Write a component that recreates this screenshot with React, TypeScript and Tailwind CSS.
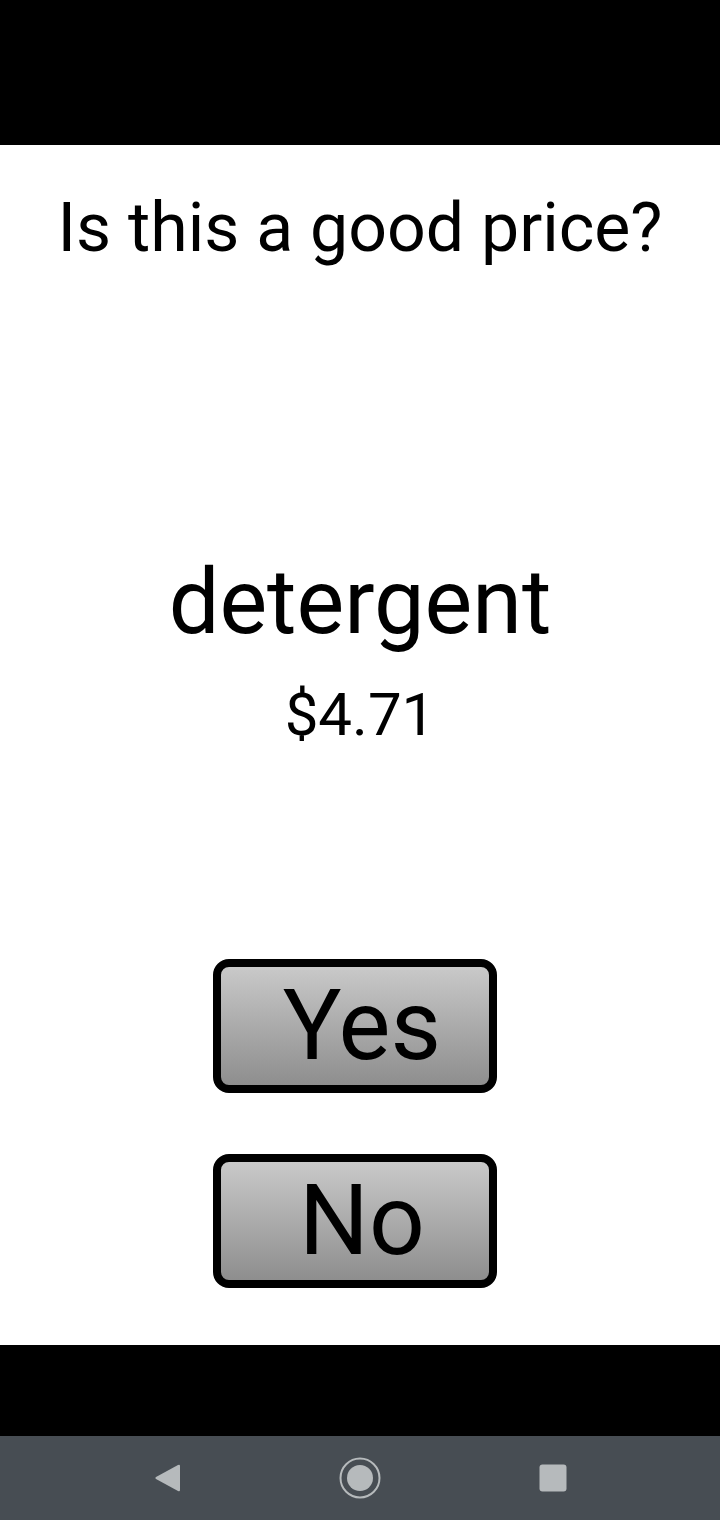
const font = { fontFamily: 'Roboto, "Noto Sans", sans-serif' }

function ChoiceButton({ label }: { label: string }) {
  return (
    <button
      className="flex h-[134px] w-[284px] items-center justify-center rounded-[16px] border-[8px] border-black bg-gradient-to-b from-[#c9c9c9] to-[#8e8e8e] pl-[14px] text-[98px] leading-none text-black"
      style={font}
    >
      {label}
    </button>
  )
}

export default function App() {
  return (
    <div className="flex h-[1520px] w-[720px] flex-col bg-black" style={font}>
      {/* status bar area */}
      <div className="h-[145px] shrink-0 bg-black" />

      <div className="flex h-[1200px] shrink-0 flex-col items-center bg-white">
        <h1 className="mt-[38px] text-[68px] leading-[90px] text-black">Is this a good price?</h1>

        <div className="mt-[275px] text-[90px] leading-[110px] text-black">detergent</div>
        <div className="mt-[17px] text-[60px] leading-[80px] text-black">$4.71</div>

        <div className="mt-[204px] mr-[10px] flex flex-col items-center gap-[61px]">
          <ChoiceButton label="Yes" />
          <ChoiceButton label="No" />
        </div>
      </div>

      <div className="h-[91px] shrink-0 bg-black" />

      {/* android nav bar */}
      <div className="flex h-[84px] shrink-0 items-center justify-between bg-[#474d53] px-[153px]">
        <svg width="28" height="30" viewBox="0 0 28 30">
          <path d="M25 2 L3 14 Q1.5 15 3 16 L25 28 Q27 29 27 27 V3 Q27 1 25 2 Z" fill="#b6babc" />
        </svg>
        <svg width="42" height="42" viewBox="0 0 42 42">
          <circle cx="21" cy="21" r="19.5" fill="none" stroke="#b6babc" strokeWidth="2" />
          <circle cx="21" cy="21" r="13" fill="#b6babc" />
        </svg>
        <svg width="28" height="28" viewBox="0 0 28 28">
          <rect x="0.5" y="0.5" width="27" height="27" rx="3" fill="#b6babc" />
        </svg>
      </div>
    </div>
  )
}
